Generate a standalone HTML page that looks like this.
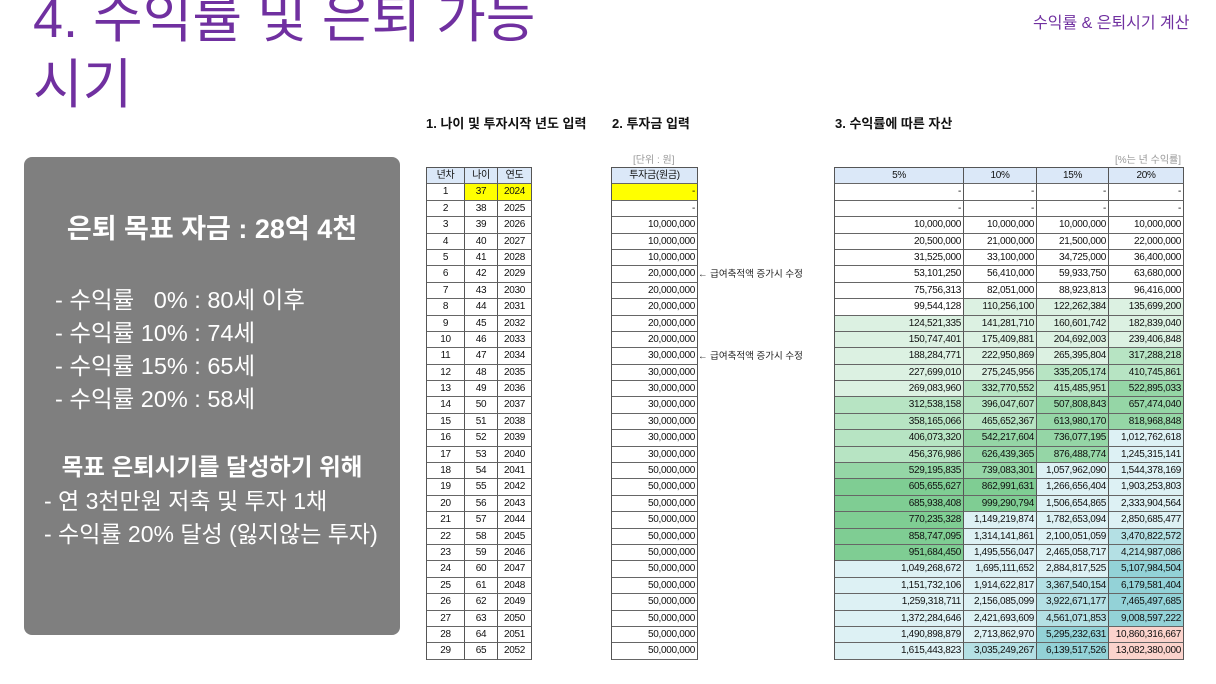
<!DOCTYPE html>
<html><head><meta charset="utf-8"><style>
*{margin:0;padding:0;box-sizing:border-box}
body{width:1216px;height:684px;background:#fff;position:relative;overflow:hidden;font-family:"Liberation Sans","Noto Sans CJK KR",sans-serif}
.title{position:absolute;left:33px;top:-14px;color:#7030a0;font-size:54px;line-height:66px;font-weight:400;white-space:nowrap}
.tr{position:absolute;left:1033px;top:9px;color:#7030a0;font-size:16px;white-space:nowrap}
.h{position:absolute;top:113px;font-size:13px;font-weight:bold;color:#111;white-space:nowrap}
.note{position:absolute;top:151px;font-size:10px;color:#999}
.arr{position:absolute;left:698px;font-size:9.5px;color:#222}
.panel{position:absolute;left:24px;top:157px;width:376px;height:478px;background:#7f7f7f;border-radius:8px;color:#fff}
.panel div{position:absolute;white-space:nowrap}
.g{position:absolute;display:grid;grid-auto-rows:16.4px;border-left:1px solid #555;border-top:1px solid #555;font-size:10px;letter-spacing:-0.3px;color:#111}
.g span{border-right:1px solid #555;border-bottom:1px solid #666;text-align:right;padding-right:2px;line-height:15.4px;white-space:nowrap;overflow:hidden}
.g span.c{text-align:center;padding:0}
.hd{background:#dbe8f8}
.y{background:#ffff00}
.L{background:#dcf1e2}.M{background:#b7e4c3}.D{background:#95d6a6}.E{background:#7fcd93}
.C{background:#ddf1f4}.T{background:#b4e0e4}.U{background:#93d2d7}.P{background:#fbd3cc}
</style></head><body>
<div class="title">4. 수익률 및 은퇴 가능<br>시기</div>
<div class="tr">수익률 &amp; 은퇴시기 계산</div>
<div class="h" style="left:426px">1. 나이 및 투자시작 년도 입력</div>
<div class="h" style="left:612px">2. 투자금 입력</div>
<div class="h" style="left:835px">3. 수익률에 따른 자산</div>
<div class="note" style="left:633px">[단위 : 원]</div>
<div class="note" style="left:1115px">[%는 년 수익률]</div>
<div class="arr" style="top:266px">← 급여축적액 증가시 수정</div>
<div class="arr" style="top:348px">← 급여축적액 증가시 수정</div>

<div class="panel">
<div style="left:0;width:376px;text-align:center;top:50px;font-size:27px;font-weight:bold">은퇴 목표 자금 : 28억 4천</div>
<div style="left:31px;top:124px;font-size:23.5px">- 수익률 &nbsp;&nbsp;0% : 80세 이후</div>
<div style="left:31px;top:157px;font-size:23.5px">- 수익률 10% : 74세</div>
<div style="left:31px;top:190px;font-size:23.5px">- 수익률 15% : 65세</div>
<div style="left:31px;top:223px;font-size:23.5px">- 수익률 20% : 58세</div>
<div style="left:0;width:376px;text-align:center;top:291px;font-size:23.5px;font-weight:bold">목표 은퇴시기를 달성하기 위해</div>
<div style="left:20px;top:325px;font-size:23px">- 연 3천만원 저축 및 투자 1채</div>
<div style="left:20px;top:358px;font-size:23px">- 수익률 20% 달성 (잃지않는 투자)</div>
</div>

<div class="g" style="left:426px;top:167px;grid-template-columns:38px 33px 34px">
<span class="c hd">년차</span><span class="c hd">나이</span><span class="c hd">연도</span>
<span class="c">1</span><span class="c y">37</span><span class="c y">2024</span>
<span class="c">2</span><span class="c">38</span><span class="c">2025</span>
<span class="c">3</span><span class="c">39</span><span class="c">2026</span>
<span class="c">4</span><span class="c">40</span><span class="c">2027</span>
<span class="c">5</span><span class="c">41</span><span class="c">2028</span>
<span class="c">6</span><span class="c">42</span><span class="c">2029</span>
<span class="c">7</span><span class="c">43</span><span class="c">2030</span>
<span class="c">8</span><span class="c">44</span><span class="c">2031</span>
<span class="c">9</span><span class="c">45</span><span class="c">2032</span>
<span class="c">10</span><span class="c">46</span><span class="c">2033</span>
<span class="c">11</span><span class="c">47</span><span class="c">2034</span>
<span class="c">12</span><span class="c">48</span><span class="c">2035</span>
<span class="c">13</span><span class="c">49</span><span class="c">2036</span>
<span class="c">14</span><span class="c">50</span><span class="c">2037</span>
<span class="c">15</span><span class="c">51</span><span class="c">2038</span>
<span class="c">16</span><span class="c">52</span><span class="c">2039</span>
<span class="c">17</span><span class="c">53</span><span class="c">2040</span>
<span class="c">18</span><span class="c">54</span><span class="c">2041</span>
<span class="c">19</span><span class="c">55</span><span class="c">2042</span>
<span class="c">20</span><span class="c">56</span><span class="c">2043</span>
<span class="c">21</span><span class="c">57</span><span class="c">2044</span>
<span class="c">22</span><span class="c">58</span><span class="c">2045</span>
<span class="c">23</span><span class="c">59</span><span class="c">2046</span>
<span class="c">24</span><span class="c">60</span><span class="c">2047</span>
<span class="c">25</span><span class="c">61</span><span class="c">2048</span>
<span class="c">26</span><span class="c">62</span><span class="c">2049</span>
<span class="c">27</span><span class="c">63</span><span class="c">2050</span>
<span class="c">28</span><span class="c">64</span><span class="c">2051</span>
<span class="c">29</span><span class="c">65</span><span class="c">2052</span>
</div>

<div class="g" style="left:611px;top:167px;grid-template-columns:86px">
<span class="c hd">투자금(원금)</span>
<span class="y">-</span><span>-</span>
<span>10,000,000</span><span>10,000,000</span><span>10,000,000</span>
<span>20,000,000</span><span>20,000,000</span><span>20,000,000</span><span>20,000,000</span><span>20,000,000</span>
<span>30,000,000</span><span>30,000,000</span><span>30,000,000</span><span>30,000,000</span><span>30,000,000</span><span>30,000,000</span><span>30,000,000</span>
<span>50,000,000</span><span>50,000,000</span><span>50,000,000</span><span>50,000,000</span><span>50,000,000</span><span>50,000,000</span><span>50,000,000</span><span>50,000,000</span><span>50,000,000</span><span>50,000,000</span><span>50,000,000</span><span>50,000,000</span>
</div>

<div class="g" style="left:834px;top:167px;grid-template-columns:129px 73px 72px 75px">
<span class="c hd">5%</span><span class="c hd">10%</span><span class="c hd">15%</span><span class="c hd">20%</span>
<span>-</span><span>-</span><span>-</span><span>-</span>
<span>-</span><span>-</span><span>-</span><span>-</span>
<span>10,000,000</span><span>10,000,000</span><span>10,000,000</span><span>10,000,000</span>
<span>20,500,000</span><span>21,000,000</span><span>21,500,000</span><span>22,000,000</span>
<span>31,525,000</span><span>33,100,000</span><span>34,725,000</span><span>36,400,000</span>
<span>53,101,250</span><span>56,410,000</span><span>59,933,750</span><span>63,680,000</span>
<span>75,756,313</span><span>82,051,000</span><span>88,923,813</span><span>96,416,000</span>
<span>99,544,128</span><span class="L">110,256,100</span><span class="L">122,262,384</span><span class="L">135,699,200</span>
<span class="L">124,521,335</span><span class="L">141,281,710</span><span class="L">160,601,742</span><span class="L">182,839,040</span>
<span class="L">150,747,401</span><span class="L">175,409,881</span><span class="L">204,692,003</span><span class="L">239,406,848</span>
<span class="L">188,284,771</span><span class="L">222,950,869</span><span class="L">265,395,804</span><span class="M">317,288,218</span>
<span class="L">227,699,010</span><span class="L">275,245,956</span><span class="M">335,205,174</span><span class="M">410,745,861</span>
<span class="L">269,083,960</span><span class="M">332,770,552</span><span class="M">415,485,951</span><span class="D">522,895,033</span>
<span class="M">312,538,158</span><span class="M">396,047,607</span><span class="D">507,808,843</span><span class="D">657,474,040</span>
<span class="M">358,165,066</span><span class="M">465,652,367</span><span class="D">613,980,170</span><span class="D">818,968,848</span>
<span class="M">406,073,320</span><span class="D">542,217,604</span><span class="D">736,077,195</span><span class="C">1,012,762,618</span>
<span class="M">456,376,986</span><span class="D">626,439,365</span><span class="D">876,488,774</span><span class="C">1,245,315,141</span>
<span class="D">529,195,835</span><span class="D">739,083,301</span><span class="C">1,057,962,090</span><span class="C">1,544,378,169</span>
<span class="E">605,655,627</span><span class="E">862,991,631</span><span class="C">1,266,656,404</span><span class="C">1,903,253,803</span>
<span class="E">685,938,408</span><span class="E">999,290,794</span><span class="C">1,506,654,865</span><span class="C">2,333,904,564</span>
<span class="E">770,235,328</span><span class="C">1,149,219,874</span><span class="C">1,782,653,094</span><span class="C">2,850,685,477</span>
<span class="E">858,747,095</span><span class="C">1,314,141,861</span><span class="C">2,100,051,059</span><span class="T">3,470,822,572</span>
<span class="E">951,684,450</span><span class="C">1,495,556,047</span><span class="C">2,465,058,717</span><span class="T">4,214,987,086</span>
<span class="C">1,049,268,672</span><span class="C">1,695,111,652</span><span class="C">2,884,817,525</span><span class="U">5,107,984,504</span>
<span class="C">1,151,732,106</span><span class="C">1,914,622,817</span><span class="T">3,367,540,154</span><span class="U">6,179,581,404</span>
<span class="C">1,259,318,711</span><span class="C">2,156,085,099</span><span class="T">3,922,671,177</span><span class="U">7,465,497,685</span>
<span class="C">1,372,284,646</span><span class="C">2,421,693,609</span><span class="T">4,561,071,853</span><span class="U">9,008,597,222</span>
<span class="C">1,490,898,879</span><span class="C">2,713,862,970</span><span class="U">5,295,232,631</span><span class="P">10,860,316,667</span>
<span class="C">1,615,443,823</span><span class="T">3,035,249,267</span><span class="U">6,139,517,526</span><span class="P">13,082,380,000</span>
</div>
</body></html>
